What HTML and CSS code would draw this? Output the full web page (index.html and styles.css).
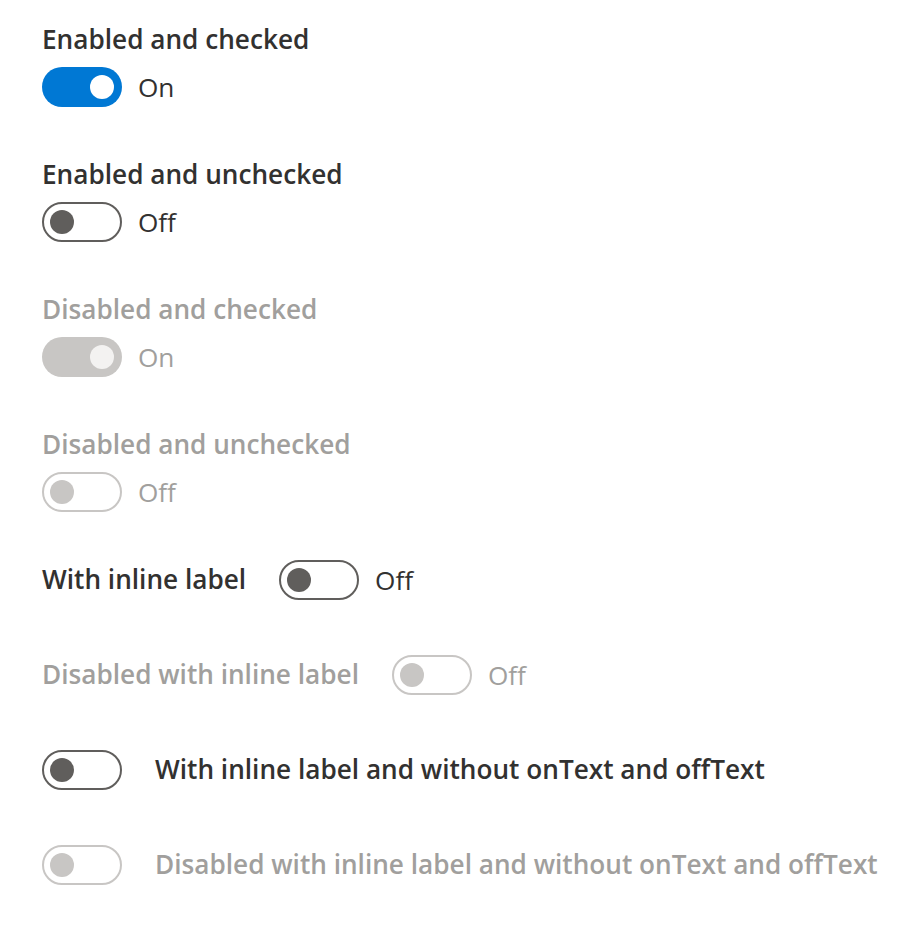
FILE: index.html
```html
<!DOCTYPE html>
<html lang="en">
<head>
<meta charset="utf-8">
<title>Toggle</title>
<link rel="stylesheet" href="styles.css">
</head>
<body>
<div class="stack">
  <div class="toggle">
    <label class="label">Enabled and checked</label>
    <div class="container"><span class="pill on"><span class="thumb"></span></span><span class="state">On</span></div>
  </div>
  <div class="toggle">
    <label class="label">Enabled and unchecked</label>
    <div class="container"><span class="pill off"><span class="thumb"></span></span><span class="state">Off</span></div>
  </div>
  <div class="toggle disabled">
    <label class="label">Disabled and checked</label>
    <div class="container"><span class="pill on"><span class="thumb"></span></span><span class="state">On</span></div>
  </div>
  <div class="toggle disabled">
    <label class="label">Disabled and unchecked</label>
    <div class="container"><span class="pill off"><span class="thumb"></span></span><span class="state">Off</span></div>
  </div>
  <div class="toggle inline">
    <label class="label">With inline label</label>
    <div class="container"><span class="pill off"><span class="thumb"></span></span><span class="state">Off</span></div>
  </div>
  <div class="toggle inline disabled">
    <label class="label">Disabled with inline label</label>
    <div class="container"><span class="pill off"><span class="thumb"></span></span><span class="state">Off</span></div>
  </div>
  <div class="toggle inline after">
    <div class="container"><span class="pill off"><span class="thumb"></span></span></div>
    <label class="label">With inline label and without onText and offText</label>
  </div>
  <div class="toggle inline after disabled">
    <div class="container"><span class="pill off"><span class="thumb"></span></span></div>
    <label class="label">Disabled with inline label and without onText and offText</label>
  </div>
</div>
</body>
</html>
```
FILE: styles.css
```css
* { box-sizing: border-box; }
html, body { background: #ffffff; }
body {
  margin: 0;
  padding: 13px 0 0 42px;
  font-family: "Open Sans", "Noto Sans", sans-serif;
  color: #323130;
  -webkit-font-smoothing: antialiased;
}
.stack {
  display: flex;
  flex-direction: column;
  gap: 20px;
}
.toggle {
  margin-bottom: 21px;
}
.label {
  display: block;
  font-size: 26.2px;
  font-weight: 600;
  line-height: 53px;
  height: 54px;
  color: #323130;
  white-space: nowrap;
}
.container {
  display: flex;
  align-items: center;
  height: 40px;
}
.pill {
  display: flex;
  align-items: center;
  width: 80px;
  height: 40px;
  border-radius: 20px;
  border: 2px solid #605e5c;
  padding: 0 6px;
  background: #ffffff;
}
.pill.on {
  background: #0078d4;
  border-color: transparent;
  justify-content: flex-end;
}
.thumb {
  width: 24px;
  height: 24px;
  border-radius: 50%;
  background: #605e5c;
}
.pill.on .thumb { background: #ffffff; }
.state {
  margin-left: 16px;
  font-size: 26.2px;
  line-height: 42px;
  color: #323130;
}
.toggle.inline {
  display: flex;
  align-items: center;
}
.toggle.inline .label { margin-right: 33px; }
.toggle.after .label { margin-right: 0; margin-left: 33px; }

.disabled .label, .disabled .state { color: #a19f9d; }
.disabled .pill.on { background: #c8c6c4; }
.disabled .pill.on .thumb { background: #f3f2f1; }
.disabled .pill.off { border-color: #c8c6c4; }
.disabled .pill.off .thumb { background: #c8c6c4; }
```
